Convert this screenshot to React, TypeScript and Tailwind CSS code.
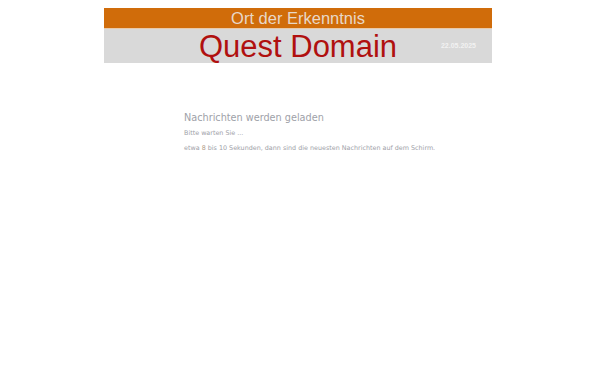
export default function App() {
  return (
    <div className="min-h-[375px] bg-white font-['Liberation_Sans',Arial,sans-serif]">
      <header className="ml-[104px] w-[388px] pt-2">
        <div className="flex h-[21px] items-center justify-center border-b border-[#e9c9a8] bg-[#d06c0a] text-[16.5px] leading-none text-[#e8d8c8]">
          Ort der Erkenntnis
        </div>
        <div className="relative flex h-[34px] items-center justify-center bg-[#d9d9d9] text-[31px] leading-none text-[#b0100f]">
          Quest Domain
          <span className="absolute right-[16px] top-[12px] text-[7px] font-bold leading-[10px] text-[#f2f2f2]">22.05.2025</span>
        </div>
      </header>
      <main className="ml-[184px] mt-[48px] font-['DejaVu_Sans',sans-serif] text-[#9ea1a8]">
        <h1 className="text-[9.7px] leading-[14px]">Nachrichten werden geladen</h1>
        <p className="mt-[3px] text-[6.4px] leading-[10px]">Bitte warten Sie ...</p>
        <p className="mt-[5px] text-[6.4px] leading-[10px]">etwa <span className="text-[#b09a86]">8</span> bis 10 Sekunden, dann sind die neuesten Nachrichten auf dem Schirm.</p>
      </main>
    </div>
  );
}
